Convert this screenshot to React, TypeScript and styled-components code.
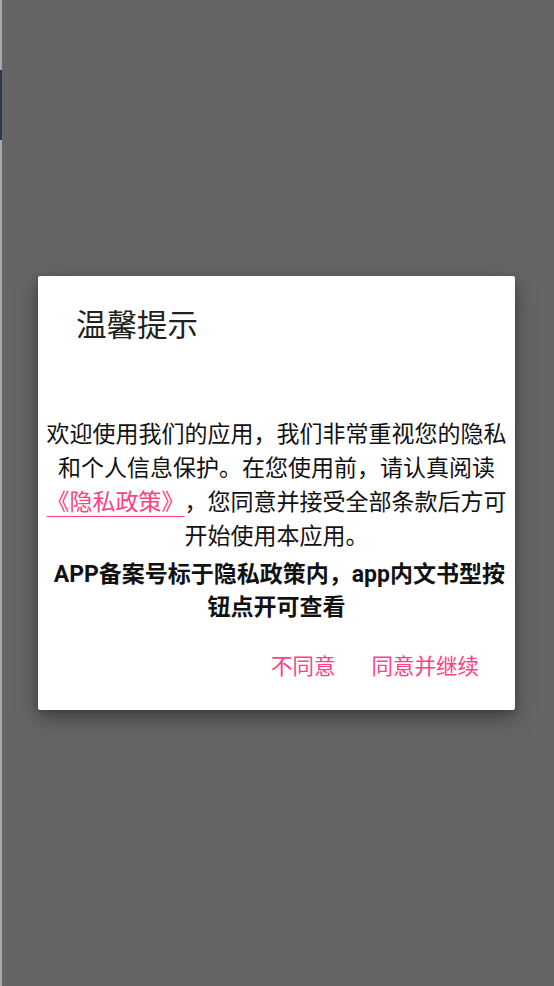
import React from "react";
import styled, { createGlobalStyle } from "styled-components";

const GlobalStyle = createGlobalStyle`
  html, body {
    margin: 0;
    padding: 0;
  }
  body {
    font-family: Roboto, "Noto Sans CJK SC", sans-serif;
    text-spacing-trim: space-all;
  }
`;

const StyledPage = styled.div`
  display: flex;
  align-items: center;
  justify-content: flex-start;
  width: 554px;
  height: 986px;
  padding-left: 38px;
  box-sizing: border-box;
  background:
    linear-gradient(to bottom, transparent 0 70px, #2d3a4d 70px 140px, transparent 140px),
    linear-gradient(to right, #a9a9a9 0 2px, transparent 2px),
    #656565;
  background-size: 2px 100%, 100% 100%, auto;
  background-repeat: no-repeat;
  overflow: hidden;
`;

const StyledDialog = styled.div`
  display: flex;
  flex-direction: column;
  width: 477px;
  height: 434px;
  padding: 30px 0 28px;
  box-sizing: border-box;
  background-color: #ffffff;
  border-radius: 2px;
  box-shadow: 0 8px 22px rgba(0, 0, 0, 0.35), 0 2px 6px rgba(0, 0, 0, 0.2);
`;

const StyledTitle = styled.h2`
  margin: 0;
  padding-left: 38px;
  font-size: 30.5px;
  line-height: 40px;
  font-weight: 400;
  color: #212121;
`;

const StyledMessage = styled.div`
  display: flex;
  flex-direction: column;
  align-items: center;
  margin-top: 72px;
  flex-grow: 1;
`;

const StyledParagraph = styled.p<{ $bold?: boolean }>`
  margin: ${(p) => (p.$bold ? "4px 0 0" : "0")};
  font-size: 23px;
  line-height: ${(p) => (p.$bold ? "33px" : "34px")};
  font-weight: ${(p) => (p.$bold ? 700 : 400)};
  color: #111111;
  text-align: center;
  white-space: nowrap;
  text-spacing-trim: space-all;
`;

const StyledLink = styled.a`
  color: #ff4081;
  text-decoration: underline;
  text-decoration-thickness: 1px;
  text-underline-offset: 6px;
`;

const StyledActions = styled.div`
  display: flex;
  justify-content: flex-end;
  gap: 36px;
  padding-right: 36px;
`;

const StyledButton = styled.button`
  padding: 0;
  border: none;
  background: none;
  font-family: Roboto, "Noto Sans CJK SC", sans-serif;
  font-size: 21.5px;
  line-height: 30px;
  color: #ff4081;
  cursor: pointer;
`;

const App: React.FC = () => {
  return (
    <>
      <GlobalStyle />
      <StyledPage>
        <StyledDialog>
          <StyledTitle>温馨提示</StyledTitle>
          <StyledMessage>
            <StyledParagraph>
              欢迎使用我们的应用，我们非常重视您的隐私
              <br />
              和个人信息保护。在您使用前，请认真阅读
              <br />
              <StyledLink>《隐私政策》</StyledLink>，您同意并接受全部条款后方可
              <br />
              开始使用本应用。
            </StyledParagraph>
            <StyledParagraph $bold>
              {"\u00a0"}APP备案号标于隐私政策内，app内文书型按
              <br />
              钮点开可查看
            </StyledParagraph>
          </StyledMessage>
          <StyledActions>
            <StyledButton>不同意</StyledButton>
            <StyledButton>同意并继续</StyledButton>
          </StyledActions>
        </StyledDialog>
      </StyledPage>
    </>
  );
};

export default App;
